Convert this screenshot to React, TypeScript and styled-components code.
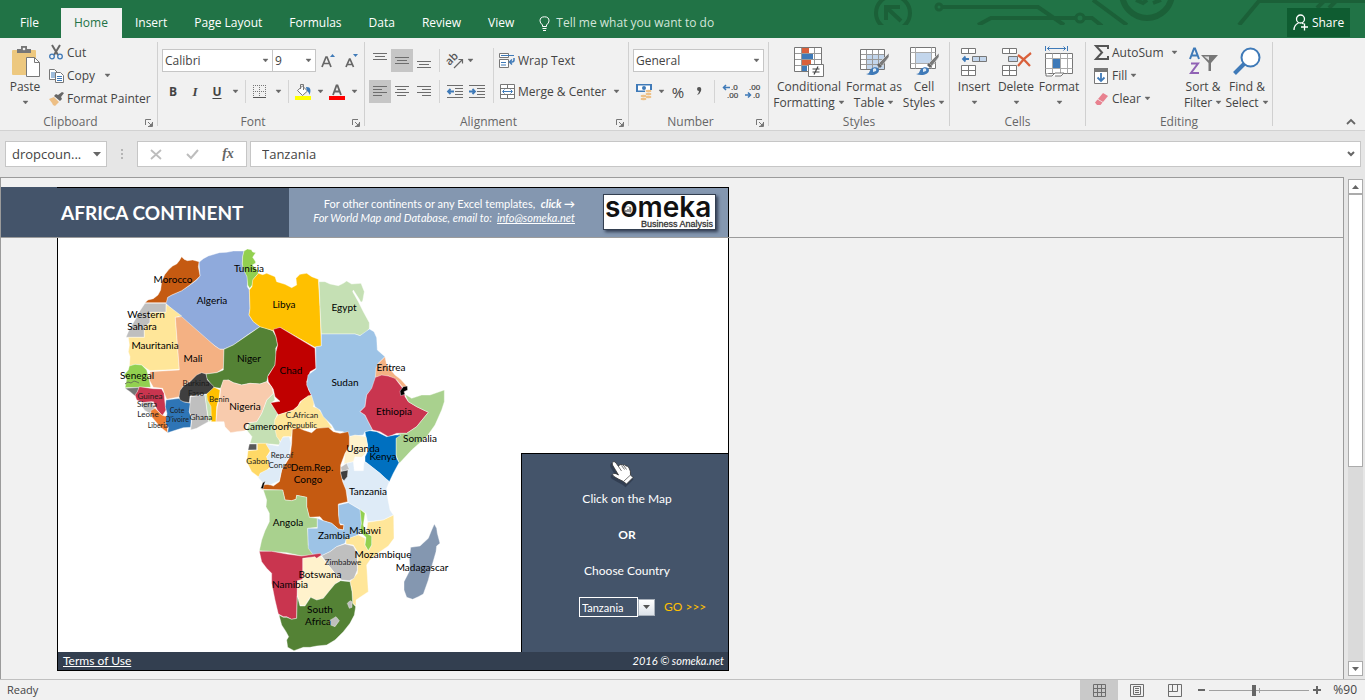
import React from "react";
import styled, { createGlobalStyle, css } from "styled-components";

const UI = `"Open Sans", "Noto Sans", sans-serif`;
const SHEET = `Lato, "Open Sans", sans-serif`;
const GREEN = "#217346";
const NAVY = "#44546a";
const INK = "#444444";
const GREY = "#6d6d6d";
const BLUE = "#3f7ab8";

const GlobalStyle = createGlobalStyle`
  *, *::before, *::after { box-sizing: border-box; }
  body { margin: 0; background: #f1f1f1; color: ${INK}; font: 12px/16px ${UI}; }
  button, input, select { font: inherit; color: inherit; letter-spacing: inherit; }
  button { background: none; border: 0; padding: 0; margin: 0; cursor: pointer; }
`;

const Page = styled.div`
  display: flex;
  flex-direction: column;
  min-height: 100vh;
  overflow: hidden;
`;

const Svg = styled.svg`
  display: block;
  flex: none;
  overflow: visible;
`;

/* ---------- title bar ---------- */

const TitleBar = styled.header`
  position: relative;
  display: flex;
  align-items: flex-end;
  height: 38px;
  background: ${GREEN};
  color: #fff;
`;

const Circuit = styled.svg`
  position: absolute;
  top: 0;
  right: 0;
`;

const Tabs = styled.nav`
  display: flex;
  position: relative;
`;

const Tab = styled.a<{ $active?: boolean; $wide?: boolean }>`
  height: 30px;
  line-height: 30px;
  padding: ${(p) => (p.$wide ? "0 22px 0 20px" : "0 14px 0 13px")};
  color: ${(p) => (p.$active ? GREEN : "#fff")};
  background: ${(p) => (p.$active ? "#f1f1f1" : "transparent")};
  text-decoration: none;
  white-space: nowrap;
`;

const TellMe = styled.button`
  position: relative;
  display: flex;
  align-items: center;
  gap: 6px;
  height: 30px;
  margin-left: 11px;
  color: #d3e5da;
`;

const Share = styled.button`
  position: relative;
  display: flex;
  align-items: center;
  justify-content: center;
  gap: 4px;
  width: 63px;
  height: 29px;
  margin: 0 15px 1px auto;
  background: #0f5c31;
  color: #fff;
`;

/* ---------- ribbon ---------- */

const Ribbon = styled.section`
  display: flex;
  height: 93px;
  border-bottom: 1px solid #d2d2d2;
  background: #f1f1f1;
`;

const Group = styled.div<{ $w: number }>`
  display: flex;
  flex-direction: column;
  flex: none;
  width: ${(p) => p.$w}px;
`;

const GroupBody = styled.div<{ $left: number }>`
  display: flex;
  flex: 1;
  padding-left: ${(p) => p.$left}px;
`;

const GroupFoot = styled.div`
  display: flex;
  align-items: center;
  height: 16px;
  color: #666;
`;

const GroupTitle = styled.span`
  flex: 1;
  text-align: center;
`;

const Launcher = styled.button`
  width: 16px;
  padding: 2px 0 0 4px;
`;

const Divider = styled.i`
  flex: none;
  width: 1px;
  margin: 4px 0;
  background: #d0d0d0;
`;

const Split = styled.i<{ $gap: number }>`
  flex: none;
  width: 1px;
  margin: 0 ${(p) => p.$gap}px;
  background: #d4d4d4;
`;

const Rows = styled.div`
  display: flex;
  flex-direction: column;
  gap: 8px;
  padding-top: 11px;
`;

const Row = styled.div`
  display: flex;
  height: 23px;
`;

const TallSplit = styled(Split)`
  margin-top: 10px;
  margin-bottom: 11px;
`;

const List = styled.div<{ $w?: number; $left?: number }>`
  display: flex;
  flex-direction: column;
  padding-top: 3px;
  padding-left: ${(p) => p.$left ?? 0}px;
  width: ${(p) => (p.$w ? p.$w + "px" : "auto")};
`;

const ListButton = styled.button`
  display: flex;
  align-items: center;
  gap: 3px;
  height: 23px;
  white-space: nowrap;
`;

const IconSlot = styled.span`
  display: flex;
  justify-content: center;
  width: 16px;
`;

const PushArrow = styled.span<{ $gap: number }>`
  margin-left: ${(p) => p.$gap}px;
`;

const BigButton = styled.button<{ $w: number }>`
  display: flex;
  flex-direction: column;
  align-items: center;
  width: ${(p) => p.$w}px;
  padding-top: 6px;
  white-space: nowrap;
`;

const BigIcon = styled.span`
  display: flex;
  align-items: center;
  height: 35px;
`;

const BigLine = styled.span`
  display: flex;
  align-items: center;
  justify-content: center;
  gap: 3px;
  height: 16px;
`;

const Tool = styled.button<{ $w?: number; $on?: boolean }>`
  display: flex;
  align-items: center;
  justify-content: center;
  width: ${(p) => p.$w ?? 22}px;
  height: 23px;
  ${(p) => p.$on && css`background: #c6c6c6;`}
`;

const Glyph = styled.span<{ $size?: number; $bold?: boolean; $italic?: boolean; $line?: boolean }>`
  font-size: ${(p) => p.$size ?? 12}px;
  font-weight: ${(p) => (p.$bold ? 700 : 400)};
  font-style: ${(p) => (p.$italic ? "italic" : "normal")};
  font-family: ${(p) => (p.$italic ? `"Liberation Serif", serif` : UI)};
  text-decoration: ${(p) => (p.$line ? "underline" : "none")};
  text-underline-offset: 2px;
`;

const Combo = styled.label<{ $w: number; $join?: boolean }>`
  display: flex;
  align-items: center;
  width: ${(p) => p.$w}px;
  height: 23px;
  padding-right: 3px;
  border: 1px solid #c6c6c6;
  ${(p) => p.$join && css`border-left: 0;`}
  background: #fff;
`;

const ComboSelect = styled.select`
  flex: 1;
  min-width: 0;
  padding: 0 0 0 2px;
  border: 0;
  outline: 0;
  background: none;
  appearance: none;
`;

const CollapseSlot = styled.div`
  display: flex;
  flex: 1;
  align-items: flex-end;
  justify-content: flex-end;
  padding: 0 9px 5px 0;
`;

/* ---------- formula bar ---------- */

const FormulaBar = styled.section`
  display: flex;
  align-items: flex-start;
  height: 46px;
  padding: 10px 4px 0 5px;
  background: #e6e6e6;
  font-size: 13px;
`;

const Field = styled.div<{ $w?: number }>`
  display: flex;
  align-items: center;
  flex: ${(p) => (p.$w ? "none" : 1)};
  width: ${(p) => (p.$w ? p.$w + "px" : "auto")};
  height: 26px;
  border: 1px solid #c6c6c6;
  background: #fff;
`;

const FieldInput = styled.input<{ $left: number }>`
  flex: 1;
  min-width: 0;
  padding: 0 0 0 ${(p) => p.$left}px;
  border: 0;
  outline: 0;
  background: none;
`;

const FieldButton = styled.button`
  display: flex;
  justify-content: center;
  flex: 1;
  color: #666;
`;

const EndButton = styled.button`
  padding: 0 5px;
`;

const Grip = styled.span`
  display: flex;
  justify-content: center;
  width: 30px;
  padding-top: 8px;
`;

const Gap = styled.i`
  width: 3px;
`;

/* ---------- worksheet ---------- */

const Workspace = styled.main`
  display: flex;
  flex: 1;
  background: #e6e6e6;
`;

const Sheet = styled.div`
  flex: 1;
  min-width: 0;
  padding-top: 9px;
  border: 1px solid #9b9b9b;
  border-bottom: 0;
  background: #f1f1f1;
`;

const FrozenRow = styled.div`
  display: flex;
  height: 51px;
  border-bottom: 1px solid #9b9b9b;
`;

const Stub = styled.div`
  flex: none;
  width: 56px;
  background: ${NAVY};
`;

const Banner = styled.div`
  display: flex;
  flex: none;
  width: 672px;
  border-top: 1px solid #000;
  border-right: 1px solid #000;
  background: #8497b0;
  color: #fff;
  font-family: ${SHEET};
`;

const BannerTitle = styled.h1`
  display: flex;
  align-items: center;
  width: 232px;
  margin: 0;
  padding-left: 4px;
  background: ${NAVY};
  font-size: 19px;
  line-height: 24px;
`;

const BannerText = styled.div`
  width: 286px;
  padding-top: 9px;
  font-size: 11px;
  line-height: 14px;
  text-align: right;
  white-space: nowrap;
`;

const BannerLink = styled.a`
  color: inherit;
`;

const ClickLink = styled(BannerLink)`
  font-weight: 700;
  font-style: italic;
  text-decoration: none;
`;

const Logo = styled.svg`
  display: block;
  margin: 6px 0 0 28px;
  background: #fff;
  border: 1px solid #333f50;
  box-shadow: 2px 2px 3px rgba(30, 40, 60, 0.8);
`;

const Board = styled.div`
  width: 672px;
  margin-left: 56px;
  border: 1px solid #000;
  border-top: 0;
  background: #fff;
  font-family: ${SHEET};
`;

const BoardBody = styled.div`
  display: flex;
  align-items: flex-end;
`;

const MapSvg = styled.svg`
  display: block;
  flex: none;
`;

const Panel = styled.form`
  display: flex;
  flex-direction: column;
  align-items: center;
  flex: 1;
  height: 199px;
  padding: 7px 0 0 4px;
  border: 1px solid #000;
  border-width: 1px 0 0 1px;
  background: ${NAVY};
  color: #fff;
  font-size: 12px;
  line-height: 20px;
`;

const HandSlot = styled.span`
  align-self: flex-start;
  height: 28px;
  margin-left: 84px;
`;

const PanelText = styled.p<{ $bold?: boolean }>`
  margin: 0 0 16px;
  font-weight: ${(p) => (p.$bold ? 700 : 400)};
`;

const Picker = styled.div`
  display: flex;
  align-items: center;
  align-self: flex-start;
  margin-left: 53px;
`;

const CountrySelect = styled.select`
  width: 59px;
  height: 20px;
  padding: 0 0 0 2px;
  border: 1px solid #fff;
  border-radius: 0;
  outline: 0;
  background: ${NAVY};
  font-size: 11px;
  appearance: none;
`;

const DropButton = styled.button`
  display: flex;
  align-items: center;
  justify-content: center;
  width: 17px;
  height: 17px;
  border: 1px solid #a8b0ba;
  background: linear-gradient(#fff, #dde3ea);
`;

const Go = styled.button`
  margin-left: 9px;
  color: #ffc000;
`;

const BoardFoot = styled.footer`
  display: flex;
  align-items: center;
  justify-content: space-between;
  height: 18px;
  padding: 0 4px 0 5px;
  background: #333f50;
  color: #fff;
  font-size: 12px;
  line-height: 18px;
`;

const Credit = styled.em`
  font-size: 11px;
`;

/* ---------- scroll bar ---------- */

const ScrollBar = styled.div`
  display: flex;
  flex-direction: column;
  flex: none;
  width: 15px;
  margin: 2px 2px 3px 4px;
  background: #dadada;
`;

const ScrollButton = styled.button`
  display: flex;
  align-items: center;
  justify-content: center;
  height: 15px;
  border: 1px solid #ababab;
  background: #fff;
`;

const ScrollThumb = styled.div`
  height: 55%;
  max-height: 273px;
  border: 1px solid #ababab;
  background: #fff;
`;

const Grow = styled.i`
  flex: 1;
`;

/* ---------- status bar ---------- */

const StatusBar = styled.footer`
  display: flex;
  align-items: center;
  height: 21px;
  padding: 0 8px 0 7px;
  border-top: 1px solid #c0c0c0;
  background: #f1f1f1;
  font-size: 11px;
`;

const Views = styled.div`
  display: flex;
  margin-left: auto;
`;

const ViewButton = styled.button<{ $on?: boolean }>`
  display: flex;
  align-items: center;
  justify-content: center;
  width: 38px;
  height: 20px;
  background: ${(p) => (p.$on ? "#c9c9c9" : "transparent")};
`;

const ZoomButton = styled.button`
  padding: 0 4px;
`;

const ZoomRange = styled.input`
  width: 100px;
  height: 11px;
  margin: 0;
  appearance: none;
  background:
    linear-gradient(#a0a0a0, #a0a0a0) 50px 50% / 1px 5px no-repeat,
    linear-gradient(#a0a0a0, #a0a0a0) 0 50% / 100% 1px no-repeat;
  &::-webkit-slider-thumb {
    appearance: none;
    width: 4px;
    height: 11px;
    background: #666;
  }
`;

const ZoomLabel = styled.span`
  width: 32px;
  text-align: right;
  font-size: 12px;
`;

/* ---------- icons ---------- */

const Caret = () => (
  <Svg width="7" height="4" viewBox="0 0 7 4" aria-hidden="true">
    <path d="M1 0h5L3.5 3z" fill="#666" stroke="#666" strokeWidth=".4" />
  </Svg>
);

const Lines = ({ widths, top }: { widths: number[]; top: number }) => (
  <Svg width="14" height="15" viewBox="0 0 14 15">
    {widths.map((w, i) => (
      <path key={i} d={`M${(14 - w) / 2} ${top + i * 3 + 0.5}h${w}`} stroke={GREY} />
    ))}
  </Svg>
);

const TextLines = ({ right, center }: { right?: boolean; center?: boolean }) => (
  <Svg width="14" height="11" viewBox="0 0 14 11">
    {[14, 9, 14, 9].map((w, i) => (
      <path key={i} d={`M${right ? 14 - w : center ? Math.floor((14 - w) / 2) : 0} ${i * 3 + 0.5}h${w}`} stroke={GREY} />
    ))}
  </Svg>
);

const PasteIcon = () => (
  <Svg width="29" height="31" viewBox="0 0 29 31">
    <rect x="1" y="4" width="24" height="25" rx="1" fill="#edc87f" />
    <path d="M6 7V3h4V0h6v3h4v4z" fill="#777" />
    <circle cx="13" cy="3" r="1.3" fill="#f1f1f1" />
    <path d="M15.5 11.5h8l5 5v14h-13z" fill="#fff" stroke="#777" />
    <path d="M23.500 11.500v5h5" fill="none" stroke="#777" />
  </Svg>
);

const CutIcon = () => (
  <Svg width="14" height="15" viewBox="0 0 14 15">
    <path d="M3 0l6 10M11 0L5 10" stroke="#666" strokeWidth="2" />
    <circle cx="3" cy="11.500" r="2.300" fill="none" stroke={BLUE} strokeWidth="1.300" />
    <circle cx="11" cy="11.500" r="2.300" fill="none" stroke={BLUE} strokeWidth="1.300" />
  </Svg>
);

const CopyIcon = () => (
  <Svg width="15" height="14" viewBox="0 0 15 14">
    <path d="M.5.5h5l3 3v7h-8z" fill="#fff" stroke="#777" />
    <path d="M2 4h4M2 6h4M2 8h4" stroke={BLUE} />
    <path d="M6.500 3.500h5l3 3v7h-8z" fill="#fff" stroke="#777" />
    <path d="M8 7.500h5M8 9.500h5M8 11.500h5" stroke={BLUE} />
  </Svg>
);

const BrushIcon = () => (
  <Svg width="15" height="14" viewBox="0 0 15 14">
    <path d="M0 7l5-2 5 5-4 4-2-1-1-2z" fill="#edbf85" />
    <path d="M5 4l2-2 2 1 4-3 2 1-3 4 1 2-2 2z" fill="#666" />
  </Svg>
);

const LauncherIcon = () => (
  <Svg width="8" height="8" viewBox="0 0 8 8">
    <path d="M.5 6V.5H6" fill="none" stroke="#777" />
    <path d="M3 3l3 3M7.500 3v4.500H3" fill="none" stroke="#777" />
    <path d="M7 4v3H4z" fill="#777" />
  </Svg>
);

const FontSizeIcon = ({ grow }: { grow?: boolean }) => (
  <Svg width="14" height="15" viewBox="0 0 14 15">
    <path d={grow ? "M1 14L5 4h1l4 10M2.500 10.500h6" : "M2 14L5.500 6h.5L9.500 14M3.500 11.500h4.500"} fill="none" stroke="#666" strokeWidth="1.700" />
    <path d={grow ? "M9 4l2.500-3L14 4z" : "M9 1h5l-2.500 3z"} fill={BLUE} />
  </Svg>
);

const BorderIcon = () => (
  <Svg width="14" height="14" viewBox="0 0 14 14">
    <path d="M.5 0v13M6.500 0v13M12.500 0v13M0 .5h13M0 6.500h13" stroke="#777" strokeDasharray="1 1" />
    <path d="M0 12.500h13" stroke="#555" />
  </Svg>
);

const BucketIcon = () => (
  <Svg width="16" height="16" viewBox="0 0 16 16">
    <path d="M2.500 6.500L7.500 2l5 5-5 4.500z" fill="#fff" stroke="#777" />
    <path d="M5.500 5V.5h3V6" fill="none" stroke="#777" />
    <path d="M11 3c4.500-.5 5.500 3 3.500 8-.5-2.500-1.500-3.500-2.500-4z" fill={BLUE} />
    <rect y="12" width="16" height="4" fill="#ffff00" />
  </Svg>
);

const FontColorIcon = () => (
  <Svg width="16" height="16" viewBox="0 0 16 16">
    <path d="M4 11L7.500 1.500h1L12 11M5.500 7.500h5" fill="none" stroke="#666" strokeWidth="1.800" />
    <rect y="12" width="16" height="4" fill="#f00" />
  </Svg>
);

const OrientIcon = () => (
  <Svg width="17" height="16" viewBox="0 0 17 16">
    <g transform="rotate(-45 6 8)">
      <text x="0" y="9" fontSize="11" fontWeight="600" fill="#555" fontFamily="Open Sans">ab</text>
    </g>
    <path d="M7 15l8-8M11.500 6.500H15.500V10.500" fill="none" stroke="#666" strokeWidth="1.200" />
  </Svg>
);

const IndentIcon = ({ more }: { more?: boolean }) => (
  <Svg width="16" height="13" viewBox="0 0 16 13">
    <path d="M0 .5h16M8 3.500h8M8 6.500h8M8 9.500h8M0 12.500h16" stroke={GREY} />
    <path d={more ? "M0 6.500h5M3.500 4L6 6.500 3.500 9" : "M1 6.500h6M3.500 4L1 6.500 3.500 9"} fill="none" stroke={BLUE} strokeWidth="1.800" />
  </Svg>
);

const WrapIcon = () => (
  <Svg width="16" height="15" viewBox="0 0 16 15">
    <path d="M.5.5h9v4h-9zM.5 6.500h9v8h-9z" fill="#fff" stroke="#777" />
    <path d="M2 2.500h13M2 9.500h5M2 12h5" stroke={BLUE} />
    <path d="M15 5v2q0 2-2 2h-2M13 6.500L10.500 9 13 11.500" fill="none" stroke={BLUE} strokeWidth="1.500" />
  </Svg>
);

const MergeIcon = () => (
  <Svg width="15" height="15" viewBox="0 0 15 15">
    <path d="M.5.5h14v14H.5zM.5 4.500h14M.5 10.500h14M7.500 0v4M7.500 11v4" fill="#fff" stroke="#777" />
    <path d="M3 7.500h9M4.500 5.500l-2 2 2 2M10.500 5.500l2 2-2 2" fill="none" stroke={BLUE} />
  </Svg>
);

const MoneyIcon = () => (
  <Svg width="16" height="16" viewBox="0 0 16 16">
    <path d="M0 0h16v8H0z" fill={BLUE} />
    <path d="M2 1.500h12v5H2z" fill="#fff" />
    <circle cx="8" cy="4" r="2" fill={BLUE} />
    <path d="M9 6h7v8H9zM4 11h7v5H4z" fill="#f1f1f1" />
    <g fill="#edc087">
      <ellipse cx="12.500" cy="7" rx="3" ry="1.300" />
      <ellipse cx="12.500" cy="10" rx="3" ry="1.200" />
      <ellipse cx="12.500" cy="13" rx="3" ry="1.200" />
      <ellipse cx="7.500" cy="12" rx="3" ry="1.200" />
      <ellipse cx="7.500" cy="15" rx="3" ry="1.200" />
    </g>
  </Svg>
);

const DecimalIcon = ({ less }: { less?: boolean }) => (
  <Svg width="16" height="15" viewBox="0 0 16 15" fontFamily="Liberation Sans" fontSize="8" fill="#444" stroke="#444" strokeWidth=".2">
    <text x={less ? 4 : 8} y="6">{less ? ".00" : ".0"}</text>
    <text x={less ? 8 : 4} y="14">{less ? ".0" : ".00"}</text>
    <path d={less ? "M0 11h5.500M3 8.500L5.500 11 3 13.500" : "M1 3.500h6M3 1L.5 3.500 3 6"} fill="none" stroke={BLUE} strokeWidth="1.500" />
  </Svg>
);

const CondIcon = () => (
  <Svg width="31" height="30" viewBox="0 0 31 30">
    <path d="M.5.5h27v24H.5z" fill="#fff" />
    <path d="M8 1h7v5H8zM8 13h9v5H8z" fill="#d9603b" />
    <path d="M8 7h11v5H8zM8 19h5v5H8z" fill={BLUE} />
    <path d="M.5 6.500h27M.5 12.500h27M.5 18.500h27M7.500.5v24M20.500.5v24" stroke="#999" />
    <path d="M.5.5h27v24H.5z" fill="none" stroke="#777" />
    <path d="M14.500 17.500h15v12h-15z" fill="#fff" stroke="#777" />
    <path d="M18.500 22h7M18.500 25h7M24 19.500l-4 8" stroke="#444" strokeWidth="1.200" />
  </Svg>
);

const PaintOver = () => (
  <>
    <path d="M29 6L19 16l3 3 7-9z" fill="#7a7a7a" stroke="#f1f1f1" strokeWidth=".6" />
    <path d="M19 16l-2 2 3 3 2-2z" fill="#666" />
    <path d="M6 27c4 0 3-3 5-5 3-3 8-2 8 1 0 5-8 6-13 4z" fill={BLUE} />
    <path d="M13 22c2-2 4 0 3 2l-3 1z" fill="#dfeaf5" />
  </>
);

const TableIcon = () => (
  <Svg width="29" height="29" viewBox="0 0 29 29">
    <path d="M.5 2.500h24v20H.5z" fill="#fff" />
    <path d="M6 8h18v14H6z" fill="#c3d6ec" />
    <path d="M.5 7.500h24M.5 12.500h24M.5 17.500h24M6.500 2.500v20M12.500 2.500v20M18.500 2.500v20" stroke="#999" />
    <path d="M.5 2.500h24v20H.5z" fill="none" stroke="#777" />
    <PaintOver />
  </Svg>
);

const CellStyleIcon = () => (
  <Svg width="29" height="30" viewBox="0 0 29 30">
    <path d="M.5.5h25v21H.5z" fill="#fff" stroke="#777" />
    <path d="M5.500.5v21M21.500.5v21M.5 5.500h25M.5 16.500h25" stroke="#aaa" />
    <path d="M6 6h15v10H6z" fill="#c3d6ec" />
    <PaintOver />
  </Svg>
);

const InsertIcon = () => (
  <Svg width="27" height="29" viewBox="0 0 27 29">
    <path d="M.5 1.500h14v5H.5zM7.500 1.500v5M.5 18.500h14v10H.5zM7.500 18.500v10M.5 23.500h14" fill="#fff" stroke="#777" />
    <path d="M11.500 9.500h14v5h-14zM18.500 9.500v5" fill="#c3d6ec" stroke="#777" />
    <path d="M2 12h6M4.500 9.500L2 12l2.500 2.500" fill="none" stroke={BLUE} strokeWidth="1.800" />
  </Svg>
);

const DeleteIcon = () => (
  <Svg width="29" height="29" viewBox="0 0 29 29">
    <path d="M.5 1.500h14v5H.5zM7.500 1.500v5M.5 18.500h14v10H.5zM7.500 18.500v10M.5 23.500h14" fill="#fff" stroke="#777" />
    <path d="M6.500 9.500h9v5h-9z" fill="#c3d6ec" stroke="#777" />
    <path d="M16 8q6 4 12 11M29 6q-7 5-13 13" fill="none" stroke="#d9603b" strokeWidth="2.200" />
  </Svg>
);

const FormatIcon = () => (
  <Svg width="28" height="31" viewBox="0 0 28 31">
    <path d="M.5 0v5M22.500 0v5M2 2.500h19M4.500.5l-2 2 2 2M18.500.5l2 2-2 2" fill="none" stroke={BLUE} />
    <path d="M.5 7.500h27v20H.5z" fill="#fff" stroke="#777" />
    <path d="M7.500 7.500v20M15.500 7.500v20M22.500 7.500v20M.5 12.500h27M.5 22.500h27" stroke="#aaa" />
    <path d="M8 13h7v9H8z" fill={BLUE} />
    <path d="M1 27v3h6l3-3h9l-3 3h-6" fill="#fff" stroke="#777" />
  </Svg>
);

const FillIcon = () => (
  <Svg width="14" height="16" viewBox="0 0 14 16">
    <path d="M.5.5h13v15H.5z" fill="#fff" stroke="#777" />
    <path d="M0 0h14v4H0z" fill="#777" />
    <path d="M7 5v8M3.500 9.500L7 13l3.500-3.500" fill="none" stroke={BLUE} strokeWidth="1.800" />
  </Svg>
);

const SumIcon = () => (
  <Svg width="15" height="15" viewBox="0 0 15 15">
    <path d="M14 4V1H2l6 6.500L2 14h12v-3" fill="none" stroke="#555" strokeWidth="2" />
  </Svg>
);

const EraserIcon = () => (
  <Svg width="13" height="12" viewBox="0 0 13 12">
    <path d="M8 0l5 3-5 6-5-3z" fill="#e8818f" />
    <path d="M2.500 6.500l5 3-2 2.500H2L0 9.500z" fill="#e8818f" />
  </Svg>
);

const SortIcon = () => (
  <Svg width="29" height="29" viewBox="0 0 29 29">
    <path d="M1 12L5 1.500h1L10 12M2.500 8.500h6" fill="none" stroke={BLUE} strokeWidth="2" />
    <path d="M2 16.500h7L2 26h8" fill="none" stroke="#9163b5" strokeWidth="2" />
    <path d="M12 8h17l-7 8v8h-2.500v-8z" fill="#777" />
    <path d="M15 9.500h5v4z" fill="#ddd" />
  </Svg>
);

const FindIcon = () => (
  <Svg width="28" height="29" viewBox="0 0 28 29">
    <path d="M11 17L1.500 26.500" stroke={BLUE} strokeWidth="4" />
    <circle cx="17.500" cy="10.500" r="9" fill="#fff" stroke={BLUE} strokeWidth="2" />
  </Svg>
);

const HAND =
  "M2.500 4Q1.500 1.500 3.500.8 5 .3 6 2L8.500 5.500Q8.800 3.500 11 3.500 12.500 3.200 13 4.500 14.500 3 16 5 18 4.500 19 7 21 10 20.500 14L23 16.500 16.500 23 13.500 20.500Q8 18 4 15.500 1.500 13.500 3.500 12.500 6 12 8.500 14Z";

const HandIcon = () => (
  <Svg width="24" height="24" viewBox="0 0 24 24">
    <path d={HAND} fill="#111827" opacity=".35" stroke="#111827" strokeWidth="2" transform="translate(-1 2)" />
    <path d={HAND} fill="#fff" stroke="#333" strokeWidth=".8" strokeLinejoin="round" />
    <path d="M8.500 5.500l3 4.500M11.500 4.500l3 4M14 5l2.500 3.500M14 20l6.500-6" fill="none" stroke="#555" strokeWidth=".8" />
  </Svg>
);

/* ---------- map ---------- */

type Shape = [name: string, fill: string, points: string];

const northWest: Shape[] = [
  ["Algeria", "#8faadc", "297,67 310,56 325,48 345,42 358,38 380,37 400,33 432,33 428,50 427,72 437,95 443,115 442,140 448,150 450,205 447,225 460,245 480,260 445,283 400,315 370,328 358,327 345,318 270,262 197,190 203,172 215,165 245,152 270,135 290,120 300,108"],
  ["Tunisia", "#92d050", "432,33 442,27 454,29 458,36 467,38 458,52 466,64 467,69 457,75 472,90 475,100 460,118 457,135 449,145 443,135 441,110 430,88 427,72 428,50"],
  ["Morocco", "#c55a11", "245,50 252,58 262,62 278,60 297,65 295,80 300,108 288,120 268,136 245,152 215,165 203,172 199,188 135,188 144,180 160,176 174,165 182,150 185,125 194,104 207,88 218,78 230,72 238,62"],
  ["Western Sahara", "#bfbfbf", "135,190 198,190 198,217 150,217 150,248 133,262 133,292 78,292 85,275 90,265 105,240 120,212"],
  ["Mauritania", "#ffe699", "199,193 245,228 226,232 232,310 238,388 150,392 138,385 125,375 105,373 88,380 90,350 85,335 88,315 85,292 133,292 133,262 150,248 150,217 198,217"],
  ["Mali", "#f4b183", "226,232 245,230 345,318 360,328 372,328 370,385 350,398 318,402 300,402 292,415 270,425 248,440 240,470 200,478 193,460 188,445 160,442 148,420 150,395 238,390 232,310"],
  ["Niger", "#548235", "480,260 498,265 518,272 528,290 533,315 527,325 528,345 525,375 505,405 500,425 480,432 450,430 425,435 400,428 385,420 370,425 362,445 340,442 320,415 318,402 350,398 370,390 372,328 400,315"],
  ["Libya", "#ffc000", "475,100 488,104 500,100 525,110 530,125 555,133 575,143 590,135 588,115 600,103 620,100 635,110 655,118 660,200 664,318 645,322 540,262 520,272 480,260 460,245 447,225 450,205 448,150 456,140 458,120"],
  ["Cameroon", "#c5e0b4", "518,445 525,480 512,490 533,520 525,540 540,560 535,590 542,615 510,612 450,610 456,590 440,570 448,548 470,545 485,520 500,480 520,460"],
  ["Chad", "#c00000", "520,268 540,262 645,325 648,385 630,395 626,412 620,425 626,450 635,465 615,475 600,485 594,498 580,510 560,517 535,525 512,488 540,484 525,470 520,448 505,425 503,410 525,375 528,335 533,315 528,290"],
  ["Senegal", "#92d050", "88,378 105,373 125,375 140,390 148,420 152,442 125,442 75,443 78,430 80,415 72,405 85,390"],
  ["Guinea-Bissau", "#757575", "75,445 118,442 112,458 105,468 90,455"],
  ["Guinea", "#c9354f", "118,440 160,446 185,447 192,460 195,490 198,510 187,527 172,510 160,485 130,488 110,480 105,465 112,455"],
  ["Sierra Leone", "#bfbfbf", "130,488 155,485 165,505 150,520 135,512 125,498"],
  ["Liberia", "#ed7d31", "152,512 165,505 185,525 200,530 203,578 180,560 155,530"],
  ["Cote d'Ivoire", "#2e75b6", "198,480 215,478 240,475 250,485 272,490 268,515 274,535 272,562 250,563 235,568 203,578 205,562 197,550 201,520 196,500"],
  ["Burkina Faso", "#3f3f3f", "237,470 240,452 250,438 270,425 290,405 305,398 318,402 322,420 342,440 340,455 320,462 270,468 268,488 250,485 240,480"],
  ["Ghana", "#bfbfbf", "272,470 315,465 318,490 325,545 290,565 272,570 276,535 268,515"],
  ["Togo", "#c5e0b4", "315,465 325,465 335,500 333,543 326,545 320,500"],
  ["Benin", "#ffc000", "320,462 342,442 360,450 358,470 350,500 348,545 334,545 333,500 322,480"],
  ["Nigeria", "#f8cbad", "362,445 370,420 385,420 400,428 425,435 450,430 480,432 500,425 515,440 520,460 500,480 485,520 470,545 445,548 435,572 410,575 392,578 375,560 372,545 348,545 352,500 360,470"],
  ["Central African Republic", "#ffe699", "533,525 560,517 580,510 594,498 605,482 625,467 635,467 645,480 640,500 655,505 680,540 697,565 670,570 640,565 590,570 577,568 575,590 550,590 542,605 530,590 523,560 524,540"],
];

const northEast: Shape[] = [
  ["Egypt", "#c5e0b4", "117,125 135,125 150,132 175,137 190,130 200,123 215,132 243,130 253,155 248,183 243,187 236,175 220,150 218,155 235,185 250,215 268,248 268,265 258,278 240,287 225,282 124,282 120,200"],
  ["Sudan", "#9dc3e6", "124,282 225,282 240,287 268,267 282,275 290,293 292,330 315,350 295,370 288,410 282,440 260,465 255,500 240,515 255,525 265,545 278,570 255,575 250,585 200,590 190,575 165,572 155,555 130,530 120,510 105,500 95,468 80,435 84,405 108,387 107,320 124,318"],
  ["Eritrea", "#f4b183", "315,350 320,375 345,405 362,418 382,440 375,450 350,420 325,408 286,412 288,385 295,370"],
  ["Ethiopia", "#c9354f", "286,412 305,405 325,408 345,415 372,450 375,470 385,485 410,500 445,517 410,560 380,580 350,580 325,590 300,575 278,570 265,545 255,525 240,515 255,500 260,465 275,445"],
  ["Somalia", "#a9d18e", "375,463 395,475 425,465 450,465 493,450 493,485 485,510 465,555 440,590 395,630 358,670 348,645 348,590 358,580 380,580 410,560 445,517 410,500 385,485"],
  ["Djibouti", "#000000", "382,438 383,450 372,455 375,463 362,467 360,453 370,440"],
];

const south: Shape[] = [
  ["Kenya", "#0070c0", "435,65 450,62 470,65 500,80 525,75 543,75 528,85 528,140 537,158 520,190 508,215 495,205 480,190 435,155 435,140 445,120"],
  ["Uganda", "#fff2cc", "388,80 405,75 438,80 443,105 435,132 425,142 405,140 400,155 372,162 375,130 388,108"],
  ["Tanzania", "#deebf7", "380,160 400,155 403,182 430,182 432,155 440,158 480,190 508,215 500,235 503,265 510,300 520,315 490,330 460,333 443,335 438,310 420,298 385,278 378,240 368,215 382,195"],
  ["Rwanda", "#bfbfbf", "362,172 380,160 388,178 365,185"],
  ["Burundi", "#3f3f3f", "360,185 384,180 382,200 372,212 365,205"],
  ["Democratic Republic of the Congo", "#c55a11", "217,58 235,53 250,60 275,68 290,55 325,52 340,65 360,70 385,65 388,80 388,108 375,130 362,165 362,190 368,215 378,240 383,275 355,282 356,315 361,345 372,345 370,360 355,357 335,340 310,332 300,320 268,322 260,290 260,262 230,256 228,268 215,272 195,270 188,240 125,238 130,225 145,222 160,228 178,215 185,180 210,140 215,100"],
  ["Equatorial Guinea", "#595959", "88,102 110,102 110,120 84,120"],
  ["Gabon", "#ffd966", "112,100 138,100 150,105 152,120 140,140 152,165 140,185 115,200 95,185 80,155 84,122 112,120"],
  ["Republic of the Congo", "#deebf7", "138,102 175,108 188,82 208,80 213,100 207,140 185,180 178,212 150,225 130,220 115,203 120,190 150,175 140,140 152,125"],
  ["Cabinda", "#000000", "125,228 128,218 136,214 132,225 130,236 122,235"],
  ["Angola", "#a9d18e", "130,240 188,240 195,270 215,272 228,268 230,256 260,262 260,290 268,322 292,325 292,352 263,355 265,405 285,435 245,438 200,428 118,422 125,390 135,362 148,335 148,310 138,290 140,270"],
  ["Zambia", "#9dc3e6", "263,355 292,355 292,325 310,332 335,340 355,357 370,360 372,345 358,340 356,315 355,285 385,278 422,300 425,350 415,375 378,390 375,400 350,410 330,425 305,437 280,435 265,415"],
  ["Mozambique", "#ffe699", "443,337 490,330 521,315 522,385 505,408 480,425 450,450 440,465 445,545 420,562 408,570 408,588 398,580 396,540 390,515 412,490 415,430 400,405 378,402 378,388 415,375 435,385 435,405 445,422 455,405 452,375 440,365"],
  ["Malawi", "#92d050", "420,298 435,310 430,345 440,370 455,378 455,405 445,422 435,405 438,382 420,365 424,340"],
  ["Zimbabwe", "#bfbfbf", "305,437 330,425 350,410 375,402 400,408 412,430 412,480 402,505 388,512 365,510 345,490 322,462"],
  ["Botswana", "#fff2cc", "248,445 300,435 322,462 345,490 362,510 345,522 330,540 310,565 290,570 270,562 255,588 240,586 232,555 232,510 248,508"],
  ["Namibia", "#c9354f", "118,424 155,424 200,432 245,438 300,430 305,435 290,445 285,440 248,445 248,508 232,512 230,625 215,628 200,620 190,620 175,612 165,570 155,520 155,490 140,475 125,455"],
  ["South Africa", "#548235", "362,512 390,515 396,545 398,580 407,590 403,615 390,640 370,665 345,690 320,705 290,708 270,712 250,712 222,722 203,712 200,690 206,680 198,665 185,645 177,615 190,622 200,622 215,628 230,625 232,558 240,588 255,588 272,562 290,570 310,565 330,540 345,522"],
  ["Lesotho", "#bfbfbf", "328,632 348,620 358,632 345,650 332,645"],
  ["Eswatini", "#bfbfbf", "382,580 390,572 396,575 396,592 388,595"],
  ["Madagascar", "#8497b0", "643,342 650,355 652,370 660,400 650,408 648,425 635,470 625,510 610,552 595,560 578,568 560,562 552,540 552,515 570,480 568,450 572,412 600,408 625,385 635,360"],
];

type Label = [text: string, x: number, y: number, size?: number];

const labels: Label[] = [
  ["Morocco", 173, 283], ["Algeria", 212, 304], ["Tunisia", 249, 272], ["Libya", 284, 308],
  ["Egypt", 344, 311], ["Western", 146, 318], ["Sahara", 142, 330], ["Mauritania", 155, 349],
  ["Mali", 193, 362], ["Niger", 249, 362], ["Chad", 291, 374], ["Sudan", 345, 386],
  ["Eritrea", 391, 371], ["Senegal", 137, 379], ["Guinea", 150, 399, 8], ["Sierra", 147, 407, 8],
  ["Leone", 148, 417, 8], ["Liberia", 158, 428, 7], ["Cote", 177, 413, 7], ["D'ivoire", 177, 422, 7],
  ["Burkina", 196, 386, 8], ["Faso", 196, 396, 8], ["Ghana", 201, 420, 8], ["Benin", 219, 402, 8],
  ["Nigeria", 245, 410], ["Cameroon", 266, 430], ["C.African", 302, 418, 8], ["Republic", 302, 428, 8],
  ["Ethiopia", 394, 415], ["Somalia", 420, 442], ["Uganda", 363, 452], ["Kenya", 383, 460],
  ["Gabon", 258, 464, 8], ["Rep.of", 282, 458, 8], ["Congo", 280, 468, 8], ["Dem.Rep.", 312, 471],
  ["Congo", 308, 483], ["Tanzania", 368, 495], ["Angola", 288, 526], ["Zambia", 334, 539],
  ["Malawi", 365, 534], ["Zimbabwe", 343, 565, 8], ["Mozambique", 383, 558], ["Botswana", 320, 578],
  ["Namibia", 290, 588], ["Madagascar", 422, 571], ["South", 320, 613], ["Africa", 318, 625],
];

const Country = styled.polygon`
  stroke: #ffffff;
  stroke-width: 2;
  stroke-opacity: 0.6;
  stroke-linejoin: round;
  cursor: pointer;
`;

const CountryLabel = styled.text<{ $size: number }>`
  font-family: ${SHEET};
  font-size: ${(p) => p.$size}px;
  text-anchor: middle;
  fill: ${(p) => (p.$size > 8 ? "#000" : "#1c1c1c")};
  pointer-events: none;
`;

const Region = ({ x, y, shapes }: { x: number; y: number; shapes: Shape[] }) => (
  <g transform={`translate(${x} ${y}) scale(${1 / 3})`}>
    {shapes.map(([name, fill, points]) => (
      <Country key={name} fill={fill} points={points} aria-label={name} />
    ))}
  </g>
);

const AfricaMap = () => (
  <MapSvg width="463" height="414" viewBox="58 238 463 414" role="img" aria-label="Map of Africa">
    <Region x={100} y={240} shapes={northWest} />
    <Region x={280} y={240} shapes={northEast} />
    <Region x={220} y={410} shapes={south} />
    <path d="M125 384l3-2 3 1 3-2 3 1 2 1" fill="none" stroke="#6b7a55" strokeWidth="1" />
    {labels.map(([text, x, y, size]) => (
      <CountryLabel key={text + x} x={x} y={y} $size={size ?? 10}>{text}</CountryLabel>
    ))}
  </MapSvg>
);

/* ---------- composed parts ---------- */

const RibbonGroup = ({ title, w, left, launcher, children }: {
  title: string; w: number; left: number; launcher?: boolean; children: React.ReactNode;
}) => (
  <>
    <Group $w={w}>
      <GroupBody $left={left}>{children}</GroupBody>
      <GroupFoot>
        <GroupTitle>{title}</GroupTitle>
        {launcher && <Launcher aria-label={`${title} settings`}><LauncherIcon /></Launcher>}
      </GroupFoot>
    </Group>
    <Divider />
  </>
);

const Big = ({ w, icon, lines, arrowBelow }: {
  w: number; icon: React.ReactNode; lines: string[]; arrowBelow?: boolean;
}) => (
  <BigButton $w={w}>
    <BigIcon>{icon}</BigIcon>
    {lines.map((line, i) => (
      <BigLine key={line}>
        {line}
        {!arrowBelow && i === lines.length - 1 && <Caret />}
      </BigLine>
    ))}
    {arrowBelow && <BigLine><Caret /></BigLine>}
  </BigButton>
);

const ArrowTool = ({ label, w = 14 }: { label: string; w?: number }) => (
  <Tool $w={w} aria-label={label}><Caret /></Tool>
);

const ComboBox = ({ w, label, value, join }: { w: number; label: string; value: string; join?: boolean }) => (
  <Combo $w={w} $join={join}>
    <ComboSelect aria-label={label} defaultValue={value}><option>{value}</option></ComboSelect>
    <Caret />
  </Combo>
);

const tabs = ["Insert", "Page Layout", "Formulas", "Data", "Review", "View"];

export default function App() {
  return (
    <Page>
      <GlobalStyle />
      <TitleBar>
        <Circuit width="505" height="25" viewBox="860 0 505 25" fill="none" stroke="#1b6038" strokeWidth="4">
          <circle cx="893" cy="13" r="17" />
          <path d="M901 21l-14-13M886 20V7h14" />
          <circle cx="939" cy="7" r="3" strokeWidth="3" />
          <path d="M943 7h95l26 18M978 25l13-7h85M1084 18h8l10 8M1093 0l34 25" />
          <circle cx="1080" cy="18" r="4" strokeWidth="3" />
          <circle cx="1147" cy="-7" r="25" strokeWidth="6" />
          <path d="M1136 0l7 3 4-3M1153 3l8-3" />
          <path d="M1239 25l20-24h106M1317 8l8-8M1329 8l8-8" />
        </Circuit>
        <Tabs>
          <Tab href="#file" $wide>File</Tab>
          <Tab href="#home" $active>Home</Tab>
          {tabs.map((t) => <Tab key={t} href={`#${t}`}>{t}</Tab>)}
        </Tabs>
        <TellMe>
          <Svg width="11" height="15" viewBox="0 0 11 15" fill="none" stroke="#fff">
            <path d="M3.500 10.500V9Q1 7 1 4.800 1 .8 5.500.8T10 4.800Q10 7 7.500 9v1.500zM3.500 12.500h4M4 14.500h3" />
          </Svg>
          Tell me what you want to do
        </TellMe>
        <Share>
          <Svg width="15" height="17" viewBox="0 0 15 17" fill="none" stroke="#fff" strokeWidth="1.300">
            <circle cx="7.500" cy="5" r="4" />
            <path d="M1 16q0-5 4.500-7M9 9l1.500 1M11.500 9.500v7M8 13h7" />
          </Svg>
          Share
        </Share>
      </TitleBar>

      <Ribbon>
        <RibbonGroup title="Clipboard" w={157} left={5} launcher>
          <BigButton $w={40}>
            <BigIcon><PasteIcon /></BigIcon>
            <BigLine>Paste</BigLine>
            <BigLine><Caret /></BigLine>
          </BigButton>
          <List $left={3}>
            <ListButton><IconSlot><CutIcon /></IconSlot>Cut</ListButton>
            <ListButton><IconSlot><CopyIcon /></IconSlot>Copy<PushArrow $gap={6}><Caret /></PushArrow></ListButton>
            <ListButton><IconSlot><BrushIcon /></IconSlot>Format Painter</ListButton>
          </List>
        </RibbonGroup>

        <RibbonGroup title="Font" w={206} left={4} launcher>
          <Rows>
            <Row>
              <ComboBox w={111} label="Font" value="Calibri" />
              <ComboBox w={43} label="Font size" value="9" join />
              <Tool $w={24} aria-label="Increase font size"><FontSizeIcon grow /></Tool>
              <Tool aria-label="Decrease font size"><FontSizeIcon /></Tool>
            </Row>
            <Row>
              <Tool><Glyph $bold>B</Glyph></Tool>
              <Tool><Glyph $bold $italic $size={13}>I</Glyph></Tool>
              <Tool><Glyph $bold $line>U</Glyph></Tool>
              <ArrowTool label="Underline options" />
              <Split $gap={3} />
              <Tool aria-label="Borders"><BorderIcon /></Tool>
              <ArrowTool label="Border options" />
              <Split $gap={3} />
              <Tool aria-label="Fill colour"><BucketIcon /></Tool>
              <ArrowTool label="Fill colours" w={12} />
              <Tool aria-label="Font colour"><FontColorIcon /></Tool>
              <ArrowTool label="Font colours" w={12} />
            </Row>
          </Rows>
        </RibbonGroup>

        <RibbonGroup title="Alignment" w={263} left={4} launcher>
          <Rows>
            <Row>
              <Tool aria-label="Top align"><Lines widths={[14, 10, 14]} top={0} /></Tool>
              <Tool $on aria-label="Middle align"><Lines widths={[14, 10, 14]} top={4} /></Tool>
              <Tool aria-label="Bottom align"><Lines widths={[14, 10, 14]} top={8} /></Tool>
              <Split $gap={4} />
              <Tool aria-label="Orientation"><OrientIcon /></Tool>
              <ArrowTool label="Orientation options" w={8} />
            </Row>
            <Row>
              <Tool $on aria-label="Align left"><TextLines /></Tool>
              <Tool aria-label="Center"><TextLines center /></Tool>
              <Tool aria-label="Align right"><TextLines right /></Tool>
              <Split $gap={4} />
              <Tool aria-label="Decrease indent"><IndentIcon /></Tool>
              <Tool aria-label="Increase indent"><IndentIcon more /></Tool>
            </Row>
          </Rows>
          <TallSplit $gap={5} />
          <Rows>
            <ListButton><IconSlot><WrapIcon /></IconSlot>Wrap Text</ListButton>
            <ListButton><IconSlot><MergeIcon /></IconSlot>Merge &amp; Center<PushArrow $gap={4}><Caret /></PushArrow></ListButton>
          </Rows>
        </RibbonGroup>

        <RibbonGroup title="Number" w={139} left={4} launcher>
          <Rows>
            <Row><ComboBox w={131} label="Number format" value="General" /></Row>
            <Row>
              <Tool aria-label="Accounting format"><MoneyIcon /></Tool>
              <ArrowTool label="Currencies" w={12} />
              <Tool aria-label="Percent"><Glyph $size={15}>%</Glyph></Tool>
              <Tool $w={20} aria-label="Comma style">
                <Svg width="6" height="9" viewBox="0 0 6 9"><path d="M1 2q0-2 2-2 3 0 2 4-1 3-4 4 2-2 2-4-2 0-2-2z" fill="#555" /></Svg>
              </Tool>
              <Split $gap={5} />
              <Tool aria-label="Increase decimal"><DecimalIcon /></Tool>
              <Tool aria-label="Decrease decimal"><DecimalIcon less /></Tool>
            </Row>
          </Rows>
        </RibbonGroup>

        <RibbonGroup title="Styles" w={180} left={4}>
          <Big w={72} icon={<CondIcon />} lines={["Conditional", "Formatting"]} />
          <Big w={58} icon={<TableIcon />} lines={["Format as", "Table"]} />
          <Big w={42} icon={<CellStyleIcon />} lines={["Cell", "Styles"]} />
        </RibbonGroup>

        <RibbonGroup title="Cells" w={135} left={3}>
          <Big w={42} icon={<InsertIcon />} lines={["Insert"]} arrowBelow />
          <Big w={42} icon={<DeleteIcon />} lines={["Delete"]} arrowBelow />
          <Big w={44} icon={<FormatIcon />} lines={["Format"]} arrowBelow />
        </RibbonGroup>

        <RibbonGroup title="Editing" w={186} left={7}>
          <List $w={88}>
            <ListButton><IconSlot><SumIcon /></IconSlot>AutoSum<PushArrow $gap={4}><Caret /></PushArrow></ListButton>
            <ListButton><IconSlot><FillIcon /></IconSlot>Fill<Caret /></ListButton>
            <ListButton><IconSlot><EraserIcon /></IconSlot>Clear<Caret /></ListButton>
          </List>
          <Big w={44} icon={<SortIcon />} lines={["Sort &", "Filter"]} />
          <Big w={44} icon={<FindIcon />} lines={["Find &", "Select"]} />
        </RibbonGroup>
        <CollapseSlot>
          <button aria-label="Collapse the ribbon">
            <Svg width="10" height="6" viewBox="0 0 10 6"><path d="M1 5l4-4 4 4" fill="none" stroke="#666" strokeWidth="1.800" /></Svg>
          </button>
        </CollapseSlot>
      </Ribbon>

      <FormulaBar>
        <Field $w={102}>
          <FieldInput $left={6} aria-label="Name box" defaultValue="dropcoun..." />
          <EndButton aria-label="Names">
            <Svg width="8" height="5" viewBox="0 0 8 5"><path d="M0 0h8L4 4.500z" fill="#666" /></Svg>
          </EndButton>
        </Field>
        <Grip>
          <Svg width="2" height="11" viewBox="0 0 2 11"><path d="M0 0h2v2H0zM0 4h2v2H0zM0 8h2v2H0z" fill="#b5b5b5" /></Svg>
        </Grip>
        <Field $w={110}>
          <FieldButton aria-label="Cancel">
            <Svg width="12" height="11" viewBox="0 0 12 11"><path d="M1 1l10 9M11 1L1 10" stroke="#bdbdbd" strokeWidth="1.800" /></Svg>
          </FieldButton>
          <FieldButton aria-label="Enter">
            <Svg width="13" height="10" viewBox="0 0 13 10"><path d="M1 5l4 4 7-8" fill="none" stroke="#bdbdbd" strokeWidth="2" /></Svg>
          </FieldButton>
          <FieldButton aria-label="Insert function"><Glyph $bold $italic $size={14}>fx</Glyph></FieldButton>
        </Field>
        <Gap />
        <Field>
          <FieldInput $left={11} aria-label="Formula" defaultValue="Tanzania" />
          <EndButton aria-label="Expand formula bar">
            <Svg width="8" height="6" viewBox="0 0 8 6"><path d="M1 1l3 3 3-3" fill="none" stroke="#666" strokeWidth="2" /></Svg>
          </EndButton>
        </Field>
      </FormulaBar>

      <Workspace>
        <Sheet>
          <FrozenRow>
            <Stub />
            <Banner>
              <BannerTitle>AFRICA CONTINENT</BannerTitle>
              <BannerText>
                For other continents or any Excel templates,&nbsp; <ClickLink href="#templates">click →</ClickLink>
                <br />
                <em>For World Map and Database, email to:&nbsp; <BannerLink href="#mail">info@someka.net</BannerLink></em>
              </BannerText>
              <Logo width="113" height="36" viewBox="0 0 111 34" aria-label="someka Business Analysis">
                <text x="1" y="22" fontFamily="Inter" fontWeight="600" fontSize="28" fill="#111">someka</text>
                <circle cx="24" cy="15" r="3.500" fill="#fff" stroke="#777" strokeWidth=".5" />
                <path d="M22 17v-2M24 17v-3M26 17v-5" stroke="#222" />
                <text x="109" y="32" textAnchor="end" fontFamily="Liberation Sans" fontSize="9" fill="#333" stroke="#333" strokeWidth=".3">Business Analysis</text>
              </Logo>
            </Banner>
          </FrozenRow>
          <Board>
            <BoardBody>
              <AfricaMap />
              <Panel onSubmit={(e) => e.preventDefault()}>
                <HandSlot><HandIcon /></HandSlot>
                <PanelText>Click on the Map</PanelText>
                <PanelText $bold>OR</PanelText>
                <PanelText as="label" htmlFor="country">Choose Country</PanelText>
                <Picker>
                  <CountrySelect id="country" defaultValue="Tanzania"><option>Tanzania</option></CountrySelect>
                  <DropButton type="button" aria-label="Show countries">
                    <Svg width="7" height="4" viewBox="0 0 7 4"><path d="M0 0h7L3.500 4z" fill="#555" /></Svg>
                  </DropButton>
                  <Go>GO &gt;&gt;&gt;</Go>
                </Picker>
              </Panel>
            </BoardBody>
            <BoardFoot>
              <BannerLink href="#terms">Terms of Use</BannerLink>
              <Credit>2016 © someka.net</Credit>
            </BoardFoot>
          </Board>
        </Sheet>
        <ScrollBar>
          <ScrollButton aria-label="Scroll up">
            <Svg width="7" height="4" viewBox="0 0 7 4"><path d="M0 4h7L3.500 0z" fill="#666" /></Svg>
          </ScrollButton>
          <ScrollThumb />
          <Grow />
          <ScrollButton aria-label="Scroll down">
            <Svg width="7" height="4" viewBox="0 0 7 4"><path d="M0 0h7L3.500 4z" fill="#666" /></Svg>
          </ScrollButton>
        </ScrollBar>
      </Workspace>

      <StatusBar>
        Ready
        <Views>
          <ViewButton $on aria-label="Normal">
            <Svg width="13" height="13" viewBox="0 0 13 13"><path d="M.5.5h12v12H.5zM4.500.5v12M8.500.5v12M.5 4.500h12M.5 8.500h12" fill="none" stroke={GREY} /></Svg>
          </ViewButton>
          <ViewButton aria-label="Page layout">
            <Svg width="14" height="13" viewBox="0 0 14 13"><path d="M.5.5h13v12H.5zM3.500 2.500h7v8h-7zM5 4.500h4M5 6.500h4M5 8.500h4" fill="none" stroke={GREY} /></Svg>
          </ViewButton>
          <ViewButton aria-label="Page break preview">
            <Svg width="14" height="13" viewBox="0 0 14 13"><path d="M.5.5h13v12H.5zM4.500.5v7M9.500.5v7M.5 7.500h9" fill="none" stroke={GREY} /></Svg>
          </ViewButton>
        </Views>
        <ZoomButton aria-label="Zoom out">
          <Svg width="7" height="8" viewBox="0 0 7 8"><path d="M0 4h7" stroke="#666" strokeWidth="2" /></Svg>
        </ZoomButton>
        <ZoomRange type="range" aria-label="Zoom" min="0" max="100" defaultValue="45" />
        <ZoomButton aria-label="Zoom in">
          <Svg width="8" height="8" viewBox="0 0 8 8"><path d="M0 4h8M4 0v8" stroke="#666" strokeWidth="2" /></Svg>
        </ZoomButton>
        <ZoomLabel>%90</ZoomLabel>
      </StatusBar>
    </Page>
  );
}
